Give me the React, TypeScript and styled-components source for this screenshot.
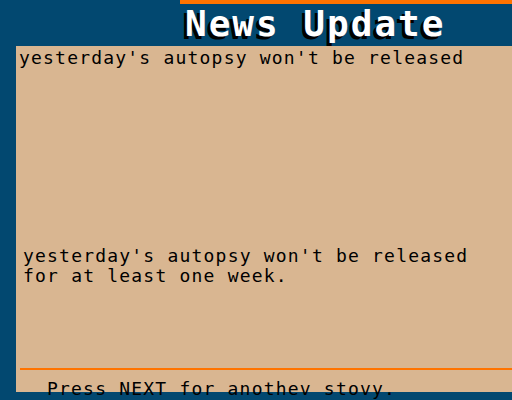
import React from 'react';
import styled, { createGlobalStyle } from 'styled-components';

const GlobalStyle = createGlobalStyle`
  html, body {
    margin: 0;
    padding: 0;
    background: #024870;
  }
`;

type Story = {
  headline: string;
  body: string[];
};

const story: Story = {
  headline: "yesterday's autopsy won't be released",
  body: ["yesterday's autopsy won't be released", 'for at least one week.']
};

function App() {
  return (
    <>
      <GlobalStyle />
      <Screen>
        <Header>
          <AccentBar />
          <Title>News Update</Title>
        </Header>
        <Panel>
          <Headline>{story.headline}</Headline>
          <Body>
            {story.body.map((line) => (
              <Line key={line}>{line}</Line>
            ))}
          </Body>
          <Rule />
          <Prompt>Press NEXT for anothev stovy.</Prompt>
        </Panel>
      </Screen>
    </>
  );
}

const Screen = styled.div`
  width: 512px;
  height: 400px;
  background: #024870;
  display: flex;
  flex-direction: column;
  overflow: hidden;
  font-family: 'DejaVu Sans Mono', 'Liberation Mono', monospace;
`;

const Header = styled.div`
  height: 46px;
  display: flex;
  flex-direction: column;
  align-items: flex-end;
  flex-shrink: 0;
`;

const AccentBar = styled.div`
  width: 332px;
  height: 4px;
  background: #ff7300;
`;

const Title = styled.h1`
  align-self: flex-start;
  margin: 0 0 0 185px;
  font-size: 36px;
  line-height: 40px;
  font-weight: bold;
  letter-spacing: 2px;
  color: #ffffff;
  text-shadow: -3px 3px 0 #000000;
  white-space: nowrap;
`;

const Panel = styled.div`
  margin-left: 16px;
  height: 346px;
  flex-shrink: 0;
  background: #d9b691;
  color: #000000;
  font-size: 18px;
  line-height: 20px;
  letter-spacing: 1.2px;
`;

const Headline = styled.div`
  padding: 2px 0 0 3px;
  white-space: nowrap;
`;

const Body = styled.div`
  margin-top: 178px;
  padding-left: 7px;
`;

const Line = styled.div`
  white-space: nowrap;
`;

const Rule = styled.div`
  margin: 82px 0 0 4px;
  height: 2px;
  background: #ff7300;
`;

const Prompt = styled.div`
  margin: 9px 0 0 31px;
  white-space: nowrap;
`;

export default App;
